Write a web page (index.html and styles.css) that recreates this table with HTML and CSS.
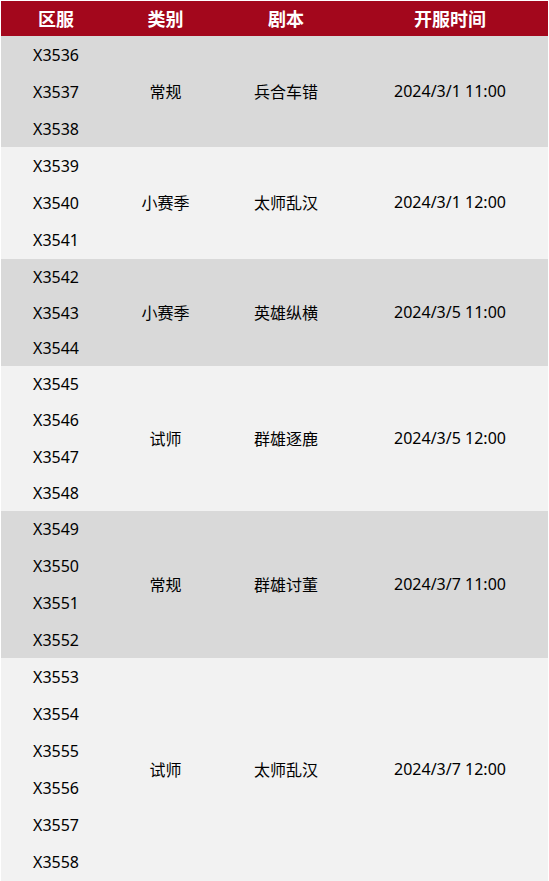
FILE: index.html
```html
<!DOCTYPE html>
<html lang="zh">
<head>
<meta charset="utf-8">
<link rel="stylesheet" href="styles.css">
</head>
<body>
<div class="table">
  <div class="head">
    <div>区服</div><div>类别</div><div>剧本</div><div>开服时间</div>
  </div>
  <div class="group dark g1">
    <div class="ids"><div>X3536</div><div>X3537</div><div>X3538</div></div>
    <div class="cell">常规</div><div class="cell">兵合车错</div><div class="cell">2024/3/1 11:00</div>
  </div>
  <div class="group light g2">
    <div class="ids"><div>X3539</div><div>X3540</div><div>X3541</div></div>
    <div class="cell">小赛季</div><div class="cell">太师乱汉</div><div class="cell">2024/3/1 12:00</div>
  </div>
  <div class="group dark g3">
    <div class="ids"><div>X3542</div><div>X3543</div><div>X3544</div></div>
    <div class="cell">小赛季</div><div class="cell">英雄纵横</div><div class="cell">2024/3/5 11:00</div>
  </div>
  <div class="group light g4">
    <div class="ids"><div>X3545</div><div>X3546</div><div>X3547</div><div>X3548</div></div>
    <div class="cell">试师</div><div class="cell">群雄逐鹿</div><div class="cell">2024/3/5 12:00</div>
  </div>
  <div class="group dark g5">
    <div class="ids"><div>X3549</div><div>X3550</div><div>X3551</div><div>X3552</div></div>
    <div class="cell">常规</div><div class="cell">群雄讨董</div><div class="cell">2024/3/7 11:00</div>
  </div>
  <div class="group light g6">
    <div class="ids"><div>X3553</div><div>X3554</div><div>X3555</div><div>X3556</div><div>X3557</div><div>X3558</div></div>
    <div class="cell">试师</div><div class="cell">太师乱汉</div><div class="cell">2024/3/7 12:00</div>
  </div>
</div>
</body>
</html>
```
FILE: styles.css
```css
html, body {
  margin: 0;
  padding: 0;
  background: #ffffff;
}
body {
  font-family: "Noto Sans", "Noto Sans CJK SC", sans-serif;
  font-size: 16px;
  color: #000;
}
.table {
  padding: 1px 1px 0 1px;
  height: 880px;
  overflow: hidden;
}
.head, .group {
  display: grid;
  grid-template-columns: 110px 109px 132px 1fr;
}
.head {
  background: #a3071c;
  color: #fff;
  font-weight: bold;
  font-size: 18px;
  height: 35px;
  align-items: center;
  text-align: center;
  font-family: "Noto Sans CJK SC", sans-serif;
}
.head div { line-height: 35px; }
.dark { background: #d9d9d9; }
.light { background: #f2f2f2; }
.ids {
  display: flex;
  flex-direction: column;
}
.ids div {
  flex: 1;
  display: flex;
  align-items: center;
  justify-content: center;
}
.cell {
  display: flex;
  align-items: center;
  justify-content: center;
  padding-bottom: 2px;
}
.g1 { height: 111px; }
.g2 { height: 112px; }
.g3 { height: 107px; }
.g4 { height: 145px; }
.g5 { height: 147px; }
.g6 { height: 223px; }
```
